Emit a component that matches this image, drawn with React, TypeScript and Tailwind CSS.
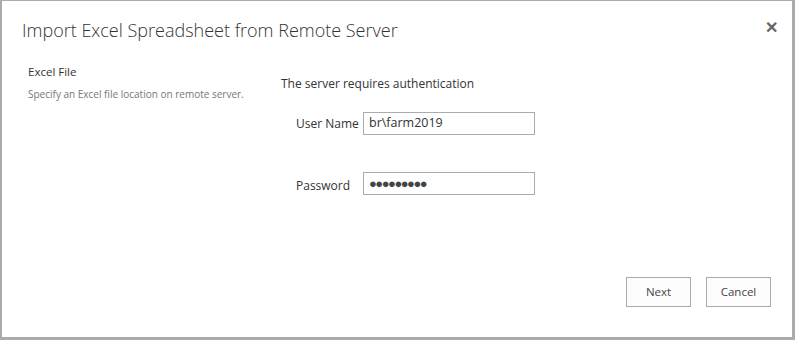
import React from 'react';

const App: React.FC = () => {
  return (
    <div className="w-[795px] h-[340px] bg-white border-t border-l-2 border-r-[3px] border-b-[3px] border-[#ababab] font-['Open_Sans',sans-serif] text-[#444] relative flex flex-col">
      {/* Header */}
      <div className="flex items-start justify-between pl-[20px] pr-[14px] pt-[16px]">
        <h1 className="text-[18px] font-light text-[#333] leading-[26px]">
          Import Excel Spreadsheet from Remote Server
        </h1>
        <button className="text-[#666] text-[16px] leading-none mt-[2px] font-bold">✕</button>
      </div>

      {/* Body */}
      <div className="flex flex-1 pt-[20px]">
        <div className="w-[279px] shrink-0 pl-[26px]">
          <div className="text-[11.5px] text-[#333]">Excel File</div>
          <div className="text-[10px] text-[#777] mt-[7px]">
            Specify an Excel file location on remote server.
          </div>
        </div>
        <div className="pt-[12px]">
          <div className="text-[12px] text-[#333]">The server requires authentication</div>
          <div className="pl-[15px] mt-[19px] flex flex-col gap-[37px]">
            <div className="flex items-center">
              <label className="w-[67px] text-[12px] text-[#333]">User Name</label>
              <div className="w-[172px] h-[23px] border border-[#ababab] px-[5px] flex items-center text-[12.5px] text-[#333]">
                br\farm2019
              </div>
            </div>
            <div className="flex items-center">
              <label className="w-[67px] text-[12px] text-[#333] pt-[4px]">Password</label>
              <div className="w-[172px] h-[23px] border border-[#ababab] px-[5px] flex items-center text-[13px] text-[#444] tracking-[-1.5px]">
                ●●●●●●●●●
              </div>
            </div>
          </div>
        </div>
      </div>

      {/* Footer */}
      <div className="flex justify-end gap-[15px] pr-[21px] pb-[30px]">
        <button className="w-[65px] h-[30px] border border-[#ababab] bg-[#fdfdfd] text-[11.5px] text-[#444]">Next</button>
        <button className="w-[65px] h-[30px] border border-[#ababab] bg-[#fdfdfd] text-[11.5px] text-[#444]">Cancel</button>
      </div>
    </div>
  );
};

export default App;
